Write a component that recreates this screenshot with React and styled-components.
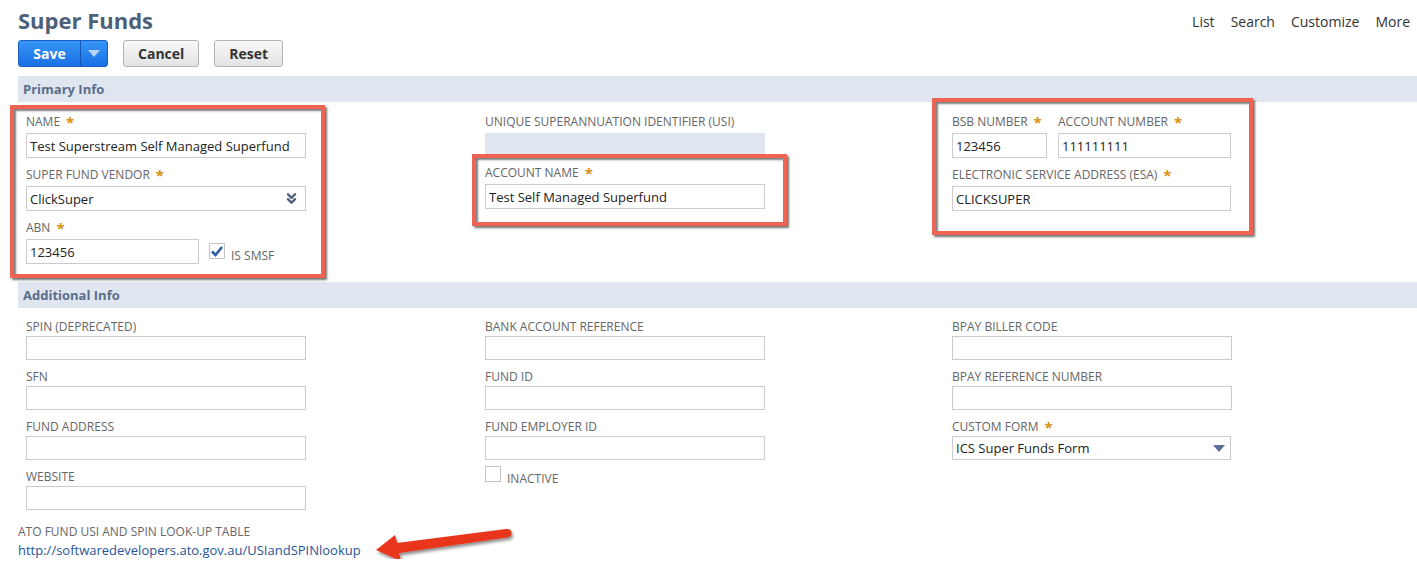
import styled, { createGlobalStyle, css } from 'styled-components'
import { ChevronsDown } from 'lucide-react'

const GlobalStyle = createGlobalStyle`
  body {
    margin: 0;
    background: #fff;
    font-family: 'Open Sans', 'Liberation Sans', sans-serif;
  }
`

// Field definitions for the lower section
const additional = [
  [
    { label: 'SPIN (DEPRECATED)' },
    { label: 'SFN' },
    { label: 'FUND ADDRESS' },
    { label: 'WEBSITE' },
  ],
  [
    { label: 'BANK ACCOUNT REFERENCE' },
    { label: 'FUND ID' },
    { label: 'FUND EMPLOYER ID' },
  ],
  [
    { label: 'BPAY BILLER CODE' },
    { label: 'BPAY REFERENCE NUMBER' },
  ],
]

function Field({ label, required, value = '', width = 280, children }) {
  return (
    <FieldBox>
      <Label>
        {label}
        {required && <Star>*</Star>}
      </Label>
      {children || <Input $w={width} defaultValue={value} />}
    </FieldBox>
  )
}

function App() {
  return (
    <Page>
      <GlobalStyle />
      <Header>
        <Title>Super Funds</Title>
        <Nav>
          <span>List</span>
          <span>Search</span>
          <span>Customize</span>
          <span>More</span>
        </Nav>
      </Header>

      <Toolbar>
        <SplitButton>
          <SaveLabel>Save</SaveLabel>
          <SaveArrow><Tri $c="#bcd7fb" /></SaveArrow>
        </SplitButton>
        <Button>Cancel</Button>
        <Button>Reset</Button>
      </Toolbar>

      <Band>Primary Info</Band>
      <Section>
        <Column>
          <Marked $t={8} $l={16} $r={19} $b={14}>
            <Stack>
              <Field label="NAME" required value="Test Superstream Self Managed Superfund" />
              <Field label="SUPER FUND VENDOR" required>
                <Select $w={280}>
                  ClickSuper
                  <ChevronsDown size={17} strokeWidth={3.4} color="#4d5f79" />
                </Select>
              </Field>
              <InlineRow>
                <Field label="ABN" required value="123456" width={173} />
                <CheckRow $top={24}>
                  <Checkbox>
                    <svg width="14" height="14" viewBox="0 0 14 14">
                      <path d="M2 7.5 L5.5 11 L12 3" fill="none" stroke="#2a5ea8" strokeWidth="2.6" />
                    </svg>
                  </Checkbox>
                  <CheckText>IS SMSF</CheckText>
                </CheckRow>
              </InlineRow>
            </Stack>
          </Marked>
        </Column>

        <Column>
          <Stack>
            <FieldBox>
              <Label>UNIQUE SUPERANNUATION IDENTIFIER (USI)</Label>
              <ReadOnly />
            </FieldBox>
            <Marked $t={10} $l={13} $r={22} $b={17}>
              <Field label="ACCOUNT NAME" required value="Test Self Managed Superfund" />
            </Marked>
          </Stack>
        </Column>

        <Column>
          <Marked $t={15} $l={20} $r={22} $b={24}>
            <Stack>
              <InlineRow $gap={11}>
                <Field label="BSB NUMBER" required value="123456" width={95} />
                <Field label="ACCOUNT NUMBER" required value="111111111" width={173} />
              </InlineRow>
              <Field label="ELECTRONIC SERVICE ADDRESS (ESA)" required value="CLICKSUPER" width={279} />
            </Stack>
          </Marked>
        </Column>
      </Section>

      <Band>Additional Info</Band>
      <Section $tight>
        {additional.map((col, i) => (
          <Column key={i}>
            <Stack>
              {col.map((f) => (
                <Field key={f.label} label={f.label} />
              ))}
              {i === 1 && (
                <CheckRow $top={-2}>
                  <Checkbox />
                  <CheckText>INACTIVE</CheckText>
                </CheckRow>
              )}
              {i === 2 && (
                <Field label="CUSTOM FORM" required>
                  <Select $w={279}>
                    ICS Super Funds Form
                    <Tri $c="#5a7199" />
                  </Select>
                </Field>
              )}
            </Stack>
          </Column>
        ))}
      </Section>

      <Footer>
        <FootLabel>ATO FUND USI AND SPIN LOOK-UP TABLE</FootLabel>
        <Link href="#">http://softwaredevelopers.ato.gov.au/USIandSPINlookup</Link>
        <Arrow width="160" height="44" viewBox="0 0 160 44">
          <defs>
            <filter id="sh" x="-10%" y="-30%" width="130%" height="180%">
              <feDropShadow dx="1.5" dy="2.5" stdDeviation="1.5" floodColor="#000" floodOpacity="0.45" />
            </filter>
          </defs>
          <path
            d="M18 24 L37 9 L39 17 L148 3 Q153 2.5 153.5 6.5 Q154 10.5 149 11.5 L41 27 L43 35 Z"
            fill="#e8341c"
            filter="url(#sh)"
          />
        </Arrow>
      </Footer>
    </Page>
  )
}

// Styled Components
const Page = styled.div`
  padding-left: 18px;
  width: 1399px;
`

const Header = styled.div`
  display: flex;
  justify-content: space-between;
  align-items: flex-start;
  height: 40px;
`

const Title = styled.h1`
  margin: 4px 0 0;
  font-size: 22px;
  line-height: 32px;
  font-weight: 700;
  color: #4d5f79;
`

const Nav = styled.div`
  display: flex;
  gap: 16px;
  padding: 13px 7px 0 0;
  font-size: 14px;
  line-height: 18px;
  color: #333;
`

const Toolbar = styled.div`
  display: flex;
  gap: 15px;
  margin-bottom: 9px;
`

const SplitButton = styled.div`
  display: flex;
  height: 27px;
  box-sizing: border-box;
  border: 1px solid #1a5fc2;
  border-radius: 3px;
  overflow: hidden;
  background: linear-gradient(#3795f6, #1a70e6);
`

const SaveLabel = styled.div`
  width: 61px;
  text-align: center;
  color: #fff;
  font-size: 14px;
  font-weight: 700;
  line-height: 25px;
`

const SaveArrow = styled.div`
  width: 26px;
  display: flex;
  align-items: center;
  justify-content: center;
  border-left: 1px solid #1656b4;
`

const Tri = styled.span`
  width: 0;
  height: 0;
  border-left: 6px solid transparent;
  border-right: 6px solid transparent;
  border-top: 7px solid ${(p) => p.$c};
`

const Button = styled.button`
  height: 27px;
  padding: 0 14px;
  border: 1px solid #b3b3b3;
  border-radius: 3px;
  background: linear-gradient(#f9f9f9, #e3e3e3);
  font-family: inherit;
  font-size: 14px;
  font-weight: 700;
  color: #333;
`

const Band = styled.div`
  height: 26px;
  line-height: 26px;
  padding-left: 5px;
  background: #e0e6ef;
  font-size: 13px;
  font-weight: 700;
  color: #5b6d8b;
`

const Label = styled.div`
  height: 18px;
  font-size: 12px;
  line-height: 18px;
  color: #666;
  margin-bottom: 2px;
  white-space: nowrap;
`

const Star = styled.span`
  display: inline-block;
  vertical-align: top;
  height: 18px;
  line-height: 18px;
  color: #d9900f;
  font-size: 15px;
  font-weight: 700;
  margin-left: 6px;
`

const Input = styled.input`
  box-sizing: border-box;
  display: block;
  width: ${(p) => p.$w}px;
  height: 25px;
  margin: 0;
  padding: 0 3px;
  border: 1px solid #cccccc;
  border-radius: 0;
  font-family: inherit;
  font-size: 13px;
  color: #222;
  outline: none;
`

const Select = styled.div`
  box-sizing: border-box;
  width: ${(p) => p.$w}px;
  height: 25px;
  display: flex;
  align-items: center;
  justify-content: space-between;
  padding: 0 5px 0 3px;
  border: 1px solid #cccccc;
  font-size: 13px;
  color: #222;
`

const ReadOnly = styled.div`
  width: 280px;
  height: 23px;
  background: #e0e6ef;
`

const Section = styled.div`
  display: grid;
  grid-template-columns: 459px 467px 1fr;
  padding: 11px 0 18px 8px;

  ${(p) =>
    p.$tight &&
    css`
      padding: 10px 0 0 8px;
      ${Label} { margin-bottom: 0; }
      ${Input} { height: 24px; }
      ${Select} { height: 24px; }
    `}
`

const Column = styled.div`
  display: flex;
  flex-direction: column;
  align-items: flex-start;
`

const Stack = styled.div`
  display: flex;
  flex-direction: column;
  align-items: flex-start;
  gap: 8px;
`

const FieldBox = styled.div`
  display: flex;
  flex-direction: column;
`

const InlineRow = styled.div`
  display: flex;
  align-items: flex-start;
  gap: ${(p) => p.$gap || 10}px;
`

const CheckRow = styled.div`
  display: flex;
  align-items: flex-end;
  gap: 6px;
  margin-top: ${(p) => p.$top}px;
`

const Checkbox = styled.div`
  box-sizing: border-box;
  width: 16px;
  height: 16px;
  border: 1px solid #c4c4c4;
  background: #fff;
  display: flex;
  align-items: center;
  justify-content: center;
`

const CheckText = styled.span`
  font-size: 12px;
  line-height: 14px;
  color: #666;
  margin-bottom: -4px;
`

const Marked = styled.div`
  position: relative;

  &::after {
    content: '';
    position: absolute;
    top: ${(p) => -p.$t}px;
    left: ${(p) => -p.$l}px;
    right: ${(p) => -p.$r}px;
    bottom: ${(p) => -p.$b}px;
    border: 4px solid #ee6352;
    box-shadow: 2px 2px 2px rgba(0, 0, 0, 0.55), inset 2px 2px 2px rgba(0, 0, 0, 0.5);
    pointer-events: none;
  }
`

const Footer = styled.div`
  position: relative;
  padding-top: 13px;
  display: flex;
  flex-direction: column;
  align-items: flex-start;
`

const FootLabel = styled.div`
  font-size: 12px;
  line-height: 18px;
  color: #666;
`

const Link = styled.a`
  font-size: 13px;
  line-height: 18px;
  color: #255599;
  text-decoration: none;
`

const Arrow = styled.svg`
  position: absolute;
  left: 340px;
  top: 16px;
`

export default App
